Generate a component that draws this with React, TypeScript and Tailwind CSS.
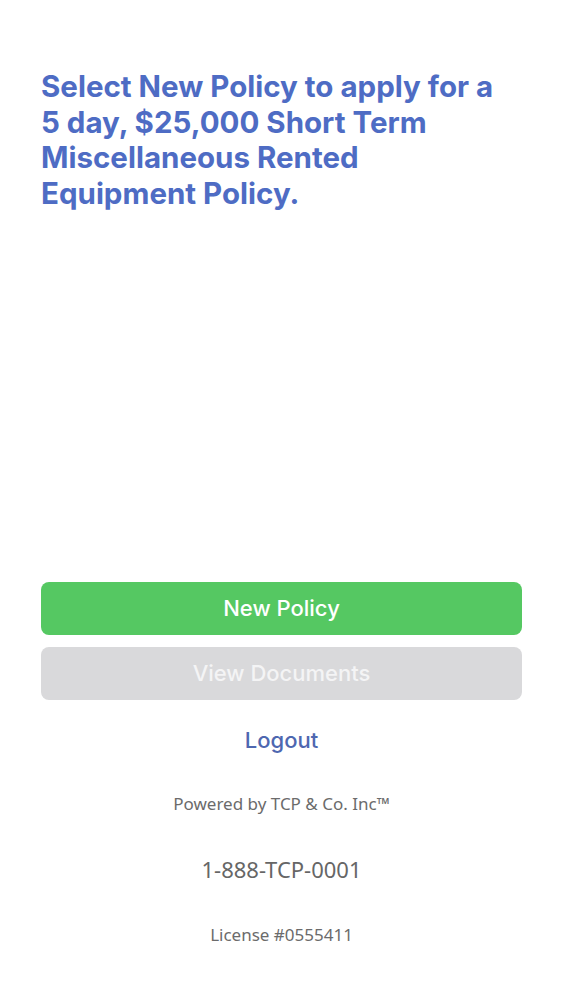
export default function App() {
  return (
    <div className="flex min-h-[1000px] w-full flex-col bg-white px-[41px]" style={{ fontFamily: "Inter, 'Noto Sans', sans-serif" }}>
      <h1 className="w-[468px] pt-[69px] text-[29.5px] font-bold leading-[35.5px] text-[#4e6cc4]">
        Select New Policy to apply for a 5 day, $25,000 Short Term Miscellaneous Rented Equipment Policy.
      </h1>
      <div className="mt-[371px] flex flex-col gap-[12px]">
        <button className="flex h-[53px] w-full items-center justify-center rounded-[8px] bg-[#55c862] text-[22px] font-medium text-white">
          New Policy
        </button>
        <button className="flex h-[53px] w-full items-center justify-center rounded-[8px] bg-[#d9d9db] text-[22px] font-medium text-[#f4f4f5]">
          View Documents
        </button>
      </div>
      <div className="mt-[24px] text-center text-[22px] font-medium text-[#4e67b0]">Logout</div>
      <div className="mt-[34px] text-center text-[17px] text-[#6b6b6b]" style={{ fontFamily: "'Noto Sans', sans-serif" }}>
        Powered by TCP &amp; Co. Inc™
      </div>
      <div className="mt-[36px] text-center text-[22px] text-[#666666]" style={{ fontFamily: "'Noto Sans', sans-serif" }}>
        1-888-TCP-0001
      </div>
      <div className="mt-[36px] text-center text-[17px] text-[#6b6b6b]" style={{ fontFamily: "'Noto Sans', sans-serif" }}>
        License #0555411
      </div>
    </div>
  );
}
